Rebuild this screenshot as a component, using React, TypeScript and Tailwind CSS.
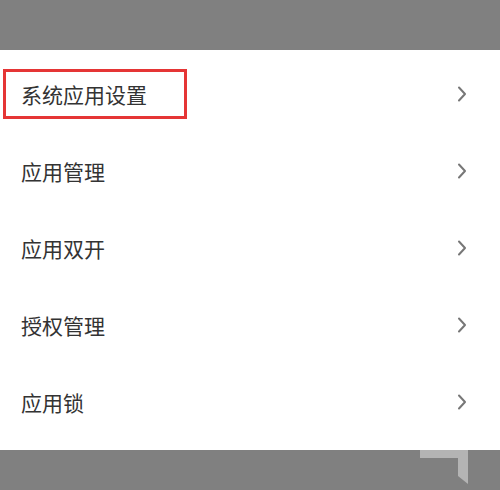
const items = ['系统应用设置', '应用管理', '应用双开', '授权管理', '应用锁'];

function Chevron() {
  return (
    <svg width="10" height="16" viewBox="0 0 10 16" fill="none" className="shrink-0">
      <path d="M2 1.5 L8 8 L2 14.5" stroke="#777" strokeWidth="2" strokeLinecap="round" strokeLinejoin="round" />
    </svg>
  );
}

export default function App() {
  return (
    <div className="w-[500px] h-[490px] flex flex-col bg-[#808080] overflow-hidden" style={{ fontFamily: '"Noto Sans CJK SC", sans-serif' }}>
      <div className="h-[50px] shrink-0 bg-[#808080]" />

      {/* List */}
      <div className="h-[400px] shrink-0 bg-white flex flex-col pt-[19px]">
        {items.map((label, i) => (
          <div key={label} className="h-[77px] shrink-0 flex items-start">
            <div className="flex-1 flex items-center justify-between h-[50px] pl-[3px] pr-[33px]">
              <div
                className={
                  i === 0
                    ? 'h-[50px] w-[184px] border-[3px] border-[#e53535] flex items-center pl-[15px]'
                    : 'h-[50px] flex items-center pl-[18px]'
                }
              >
                <span className="text-[21px] leading-none text-[#333]">{label}</span>
              </div>
              <Chevron />
            </div>
          </div>
        ))}
      </div>

      <div className="relative flex-1 bg-[#808080]">
        <svg className="absolute left-[420px] top-0" width="50" height="36" viewBox="0 0 50 36">
          <path d="M0 0 H48 V34 L38 26 V8 H0 Z" fill="#b4b4b4" />
        </svg>
      </div>
    </div>
  );
}
